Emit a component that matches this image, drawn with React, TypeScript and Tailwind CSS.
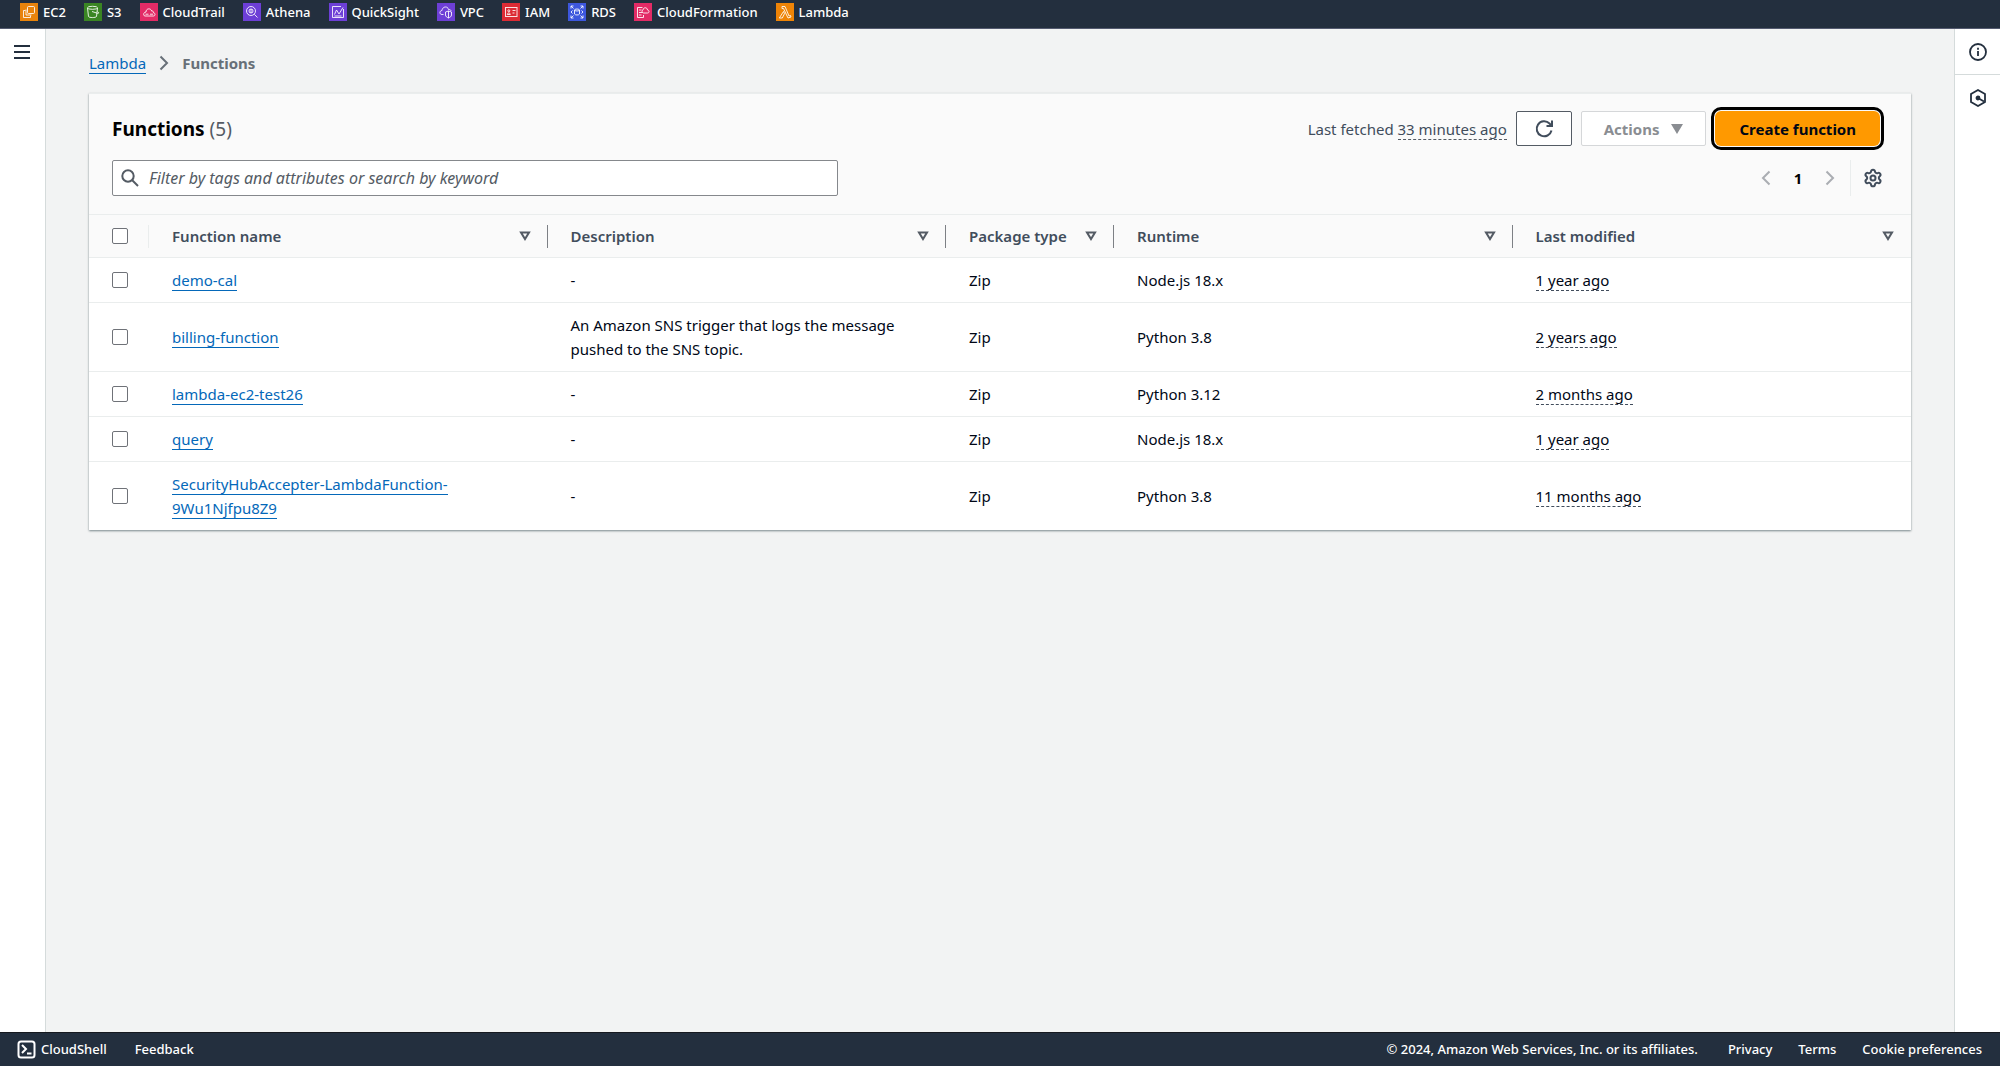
import type { ReactNode } from 'react';
import { Settings } from 'lucide-react';

const services: { name: string; tile: string; art: ReactNode }[] = [
  {
    name: 'EC2',
    tile: 'bg-[#e8830c]',
    art: (
      <>
        <rect x="7.5" y="3.5" width="7" height="7" rx="1" />
        <path d="M5.5 7.5h-2v7h7v-2M6 6.5v5.5h5.5" />
      </>
    ),
  },
  {
    name: 'S3',
    tile: 'bg-[#3a8523]',
    art: (
      <>
        <ellipse cx="8.5" cy="4.8" rx="5" ry="1.5" />
        <path d="M3.5 5l1 8.5c.6 1.4 7.2 1.4 8 0l1-8.5M8 8.5l5.5 1.8c1.5.4 1.5-.8.1-1.8" />
      </>
    ),
  },
  {
    name: 'CloudTrail',
    tile: 'bg-[#e32b66]',
    art: (
      <path d="M5 13h8.5c2 0 2-3 0-3.2.1-1.6-1-2-1.8-1.7C10.8 4.8 6 5.2 6 9 3.2 9 3 13 5 13M5.5 11.2h3M10 11.2h3" />
    ),
  },
  {
    name: 'Athena',
    tile: 'bg-[#6d3fd6]',
    art: (
      <>
        <circle cx="8" cy="8" r="4.5" />
        <circle cx="8" cy="8" r="2" />
        <path d="M11.3 11.3l3.2 3.2M8 10V6" />
      </>
    ),
  },
  {
    name: 'QuickSight',
    tile: 'bg-[#6d3fd6]',
    art: <path d="M12 3.5H3.5v11h11V6M5.5 11.5L7.5 7l2.5 4 4-6.5M5.5 13h7" />,
  },
  {
    name: 'VPC',
    tile: 'bg-[#6d3fd6]',
    art: (
      <>
        <path d="M6.5 11.5H5c-3 0-2.5-4 0-4C5.5 3 11 3 11.500 6.500c1.5-.2 2.5.5 2.5 1.5" />
        <path d="M8.500 9l3-1 3 1v3c0 1.500-1.500 2.300-3 3-1.500-.7-3-1.500-3-3zM11.500 8v7" />
      </>
    ),
  },
  {
    name: 'IAM',
    tile: 'bg-[#dc2b35]',
    art: (
      <>
        <rect x="3.5" y="4.5" width="11.5" height="9" />
        <circle cx="6.8" cy="7.8" r="1" />
        <path d="M5.3 11.5c0-2 3-2 3 0zM10.5 7.5h3M10.5 10h2" />
      </>
    ),
  },
  {
    name: 'RDS',
    tile: 'bg-[#3d57dd]',
    art: (
      <>
        <path d="M3 5.5V3h2.5M3 3l2.5 2.5M12.5 3H15v2.5M15 3l-2.5 2.5M3 12.5V15h2.5M3 15l2.5-2.5M12.5 15H15v-2.5M15 15l-2.5-2.5" />
        <ellipse cx="9" cy="7" rx="2.5" ry="1" />
        <path d="M6.5 7v4c.5 1.3 4.5 1.3 5 0V7M4.5 7.5L3 9l1.5 1.500M13.5 7.5L15 9l-1.5 1.5" />
      </>
    ),
  },
  {
    name: 'CloudFormation',
    tile: 'bg-[#e32b66]',
    art: (
      <path d="M9.5 12v2.5h-6V4.5h5M5 7h2.500M5 9.500h3.500M5 12h2.500M9.500 10h4c2 0 2-2.800 0-3-.2-3-4.200-3-4.500 0-1.500.5-1.200 2.800.5 3" />
    ),
  },
  {
    name: 'Lambda',
    tile: 'bg-[#ee8407]',
    art: <path d="M6 3.500h3l4 9.500 1.500-.5.500 1.500-3 1-4.500-9.500H6zM7.500 8.500l1 2.200-2.200 4.300h-3z" />,
  },
];

type Fn = { name: string; description: string; runtime: string; modified: string };

const functions: Fn[] = [
  { name: 'demo-cal', description: '-', runtime: 'Node.js 18.x', modified: '1 year ago' },
  {
    name: 'billing-function',
    description: 'An Amazon SNS trigger that logs the message pushed to the SNS topic.',
    runtime: 'Python 3.8',
    modified: '2 years ago',
  },
  { name: 'lambda-ec2-test26', description: '-', runtime: 'Python 3.12', modified: '2 months ago' },
  { name: 'query', description: '-', runtime: 'Node.js 18.x', modified: '1 year ago' },
  {
    name: 'SecurityHubAccepter-LambdaFunction-9Wu1Njfpu8Z9',
    description: '-',
    runtime: 'Python 3.8',
    modified: '11 months ago',
  },
];

const columns = ['Function name', 'Description', 'Package type', 'Runtime', 'Last modified'];

function Checkbox({ label }: { label: string }) {
  return (
    <input
      type="checkbox"
      aria-label={label}
      className="block size-4 appearance-none rounded-xs border border-[#6f7278] bg-white checked:bg-[#0468b9]"
    />
  );
}

function Chevron({ flip, className }: { flip?: boolean; className?: string }) {
  return (
    <svg width="16" height="16" viewBox="0 0 16 16" fill="none" stroke="currentColor" strokeWidth="2" className={className}>
      <path d={flip ? 'M11.5 1.5L5 8l6.500 6.500' : 'M4.500 1.500L11 8l-6.500 6.500'} />
    </svg>
  );
}

function TopBar() {
  return (
    <nav className="flex items-start gap-[18px] border-b border-[#545b70] bg-[#232f3e] px-5 pt-[3px] pb-[7px]">
      {services.map((s) => (
        <a key={s.name} href="#" className="flex items-center gap-[5px] text-[13px] leading-[18px] font-medium text-white">
          <span className={`block size-[18px] ${s.tile}`}>
            <svg width="18" height="18" viewBox="0 0 18 18" fill="none" stroke="#fff" strokeOpacity="0.85" strokeWidth="1">
              {s.art}
            </svg>
          </span>
          {s.name}
        </a>
      ))}
    </nav>
  );
}

function Footer() {
  return (
    <footer className="flex h-[34px] shrink-0 items-center border-t border-[#16191f] bg-[#232f3e] pr-[18px] pb-px pl-[17px] text-[13px] font-medium text-white">
      <a href="#" className="flex items-center gap-[5px]">
        <svg width="19" height="19" viewBox="0 0 19 19" fill="none" stroke="#fff" strokeWidth="2">
          <rect x="1.5" y="1.5" width="16" height="16" rx="2.5" />
          <path d="M5 5l4 4-4 4M10 13.5h4.500" />
        </svg>
        CloudShell
      </a>
      <a href="#" className="ml-7">Feedback</a>
      <span className="ml-auto">© 2024, Amazon Web Services, Inc. or its affiliates.</span>
      <a href="#" className="ml-[30px]">Privacy</a>
      <a href="#" className="ml-[26px]">Terms</a>
      <a href="#" className="ml-[26px]">Cookie preferences</a>
    </footer>
  );
}

function CardHeader() {
  return (
    <div className="bg-[#fafafa] pt-[17px] pr-7 pb-[18px] pl-[23px]">
      <div className="flex items-center gap-[9px] pr-[3px]">
        <h1 className="mr-auto text-[19px] leading-7 font-bold text-black">
          Functions <span className="font-normal text-[#545b64]">(5)</span>
        </h1>
        <span className="text-[#414d5c]">
          Last fetched <span className="border-b border-dashed border-[#545b64]">33 minutes ago</span>
        </span>
        <button type="button" aria-label="Refresh" className="flex h-[35px] w-[56px] items-center justify-center rounded-xs border border-[#545b64] bg-white text-[#414d5c]">
          <svg width="20" height="20" viewBox="0 0 20 20" fill="none" stroke="currentColor" strokeWidth="2">
            <path d="M17.500 11.500a7.500 7.500 0 1 1-2-7l2 2.200M18 1.500v5.500h-5.500" />
          </svg>
        </button>
        <button type="button" className="flex h-[35px] items-center gap-3 rounded-xs border border-[#d5d7d9] bg-white px-[22px] font-bold text-[#8a8d92]">
          Actions
          <svg width="12" height="10" viewBox="0 0 12 10" fill="currentColor">
            <path d="M0 0h12L6 10z" />
          </svg>
        </button>
        <button type="button" className="h-[35px] rounded-md bg-[#ff9900] px-[24px] font-bold text-[#000716] outline-[3px] outline-offset-1 outline-black">
          Create function
        </button>
      </div>
      <div className="mt-[14px] flex items-center">
        <div className="relative w-[41%]">
          <svg width="18" height="18" viewBox="0 0 18 18" fill="none" stroke="#545b64" strokeWidth="2" className="absolute top-[9px] left-[9px]">
            <circle cx="7" cy="7" r="5.7" />
            <path d="M11 11l6 6" />
          </svg>
          <input
            type="search"
            aria-label="Filter functions"
            placeholder="Filter by tags and attributes or search by keyword"
            className="block h-9 w-full rounded-xs border border-[#85888c] bg-white pr-3 pl-9 text-base placeholder:text-[#545b64] placeholder:italic"
          />
        </div>
        <div className="ml-auto flex items-center text-[#aaadb2]">
          <button type="button" aria-label="Previous page"><Chevron flip className="block" /></button>
          <button type="button" className="w-12 font-bold text-black">1</button>
          <button type="button" aria-label="Next page"><Chevron className="block" /></button>
          <span className="mx-3 h-9 w-px bg-[#eaeded]" />
          <button type="button" aria-label="Preferences" className="text-[#414d5c]">
            <Settings size={20} strokeWidth={2.4} />
          </button>
        </div>
      </div>
    </div>
  );
}

function FunctionsTable() {
  return (
    <table className="w-full table-fixed border-collapse text-left">
      <colgroup>
        <col className="w-[60px]" />
        <col />
        <col />
        <col className="w-[168px]" />
        <col />
        <col />
      </colgroup>
      <thead>
        <tr className="border-y border-[#eaeded] bg-[#fafafa] text-[#414d5c]">
          <th className="py-[9px] pl-[23px]">
            <div className="flex items-center justify-between">
              <Checkbox label="Select all functions" />
              <span className="h-[23px] w-px bg-[#eaeded]" />
            </div>
          </th>
          {columns.map((c, i) => (
            <th key={c} className="py-[9px] pl-[23px] font-semibold">
              <div className="flex items-center">
                <span className="mr-auto">{c}</span>
                <svg width="12" height="10" viewBox="0 0 12 10" fill="none" stroke="#545b64" strokeWidth="2">
                  <path d="M2 1.5h8L6 8z" />
                </svg>
                <span className={i === columns.length - 1 ? 'ml-4 h-[23px] w-px' : 'ml-4 h-[23px] w-px bg-[#7d8085]'} />
              </div>
            </th>
          ))}
        </tr>
      </thead>
      <tbody className="text-[#000716]">
        {functions.map((f) => (
          <tr key={f.name} className="border-b border-[#eaeded] last:border-b-0">
            <td className="py-[10px] pl-[23px]"><Checkbox label={`Select ${f.name}`} /></td>
            <td className="py-[10px] pr-5 pl-[23px] break-words">
              <a href="#" className="border-b border-[#0468b9] text-[#0468b9]">{f.name}</a>
            </td>
            <td className="py-[10px] pr-5 pl-[23px]">{f.description}</td>
            <td className="py-[10px] pl-[23px]">Zip</td>
            <td className="py-[10px] pl-[23px]">{f.runtime}</td>
            <td className="py-[10px] pl-[23px]">
              <span className="border-b border-dashed border-[#414d5c]">{f.modified}</span>
            </td>
          </tr>
        ))}
      </tbody>
    </table>
  );
}

export default function App() {
  return (
    <div className="flex min-h-screen flex-col bg-[#f2f3f3] font-['Noto_Sans',sans-serif] text-[15px] leading-6">
      <TopBar />
      <div className="flex grow">
        <aside className="w-[46px] shrink-0 border-r border-[#d5dbdb] bg-white">
          <button type="button" aria-label="Open navigation" className="mt-4 ml-[14px] block text-[#232f3e]">
            <svg width="16" height="14" viewBox="0 0 16 14" stroke="currentColor" strokeWidth="2">
              <path d="M0 1h16M0 7h16M0 13h16" />
            </svg>
          </button>
        </aside>
        <main className="grow px-[43px] pt-[22px]">
          <nav aria-label="Breadcrumb" className="flex items-center gap-[10px]">
            <a href="#" className="text-[#0468b9]"><span className="border-b border-[#0468b9]">Lambda</span></a>
            <Chevron className="text-[#687078]" />
            <span className="font-bold text-[#687078]">Functions</span>
          </nav>
          <section className="mt-[18px] border-t border-[#eaeded] bg-white shadow-[0_1px_2px_0_rgba(0,28,36,0.5)]">
            <CardHeader />
            <FunctionsTable />
          </section>
        </main>
        <aside className="flex w-[46px] shrink-0 flex-col items-center border-l border-[#d5dbdb] bg-white text-[#232f3e]">
          <button type="button" aria-label="Info" className="flex h-[46px] w-full items-center justify-center border-b border-[#d5dbdb]">
            <svg width="18" height="18" viewBox="0 0 18 18" fill="none" stroke="currentColor" strokeWidth="1.8">
              <circle cx="9" cy="9" r="8" />
              <path d="M9 8v5M9 4.8v2" />
            </svg>
          </button>
          <button type="button" aria-label="Tutorials" className="flex h-[46px] w-full items-center justify-center">
            <svg width="18" height="18" viewBox="0 0 18 18" fill="none" stroke="currentColor" strokeWidth="1.8">
              <path d="M9 1l7 4v8l-7 4-7-4V5z" />
              <path d="M9 9l6 3.5" />
              <circle cx="9" cy="9" r="1.5" fill="currentColor" />
            </svg>
          </button>
        </aside>
      </div>
      <Footer />
    </div>
  );
}
